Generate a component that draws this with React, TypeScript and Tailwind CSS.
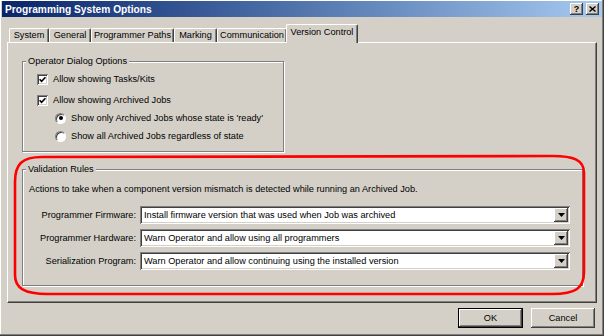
import React from "react";

const raised =
  "shadow-[inset_-1px_-1px_0_#404040,inset_1px_1px_0_#fff,inset_-2px_-2px_0_#808080]";
const sunken =
  "shadow-[inset_1px_1px_0_#808080,inset_-1px_-1px_0_#fff,inset_2px_2px_0_#404040,inset_-2px_-2px_0_#d4d0c8]";

const CheckBox = () => (
  <div className={`w-[11px] h-[11px] bg-white flex items-center justify-center shrink-0 ${sunken}`}>
    <svg width="7" height="7" viewBox="0 0 7 7">
      <path d="M0.6 3.2 L2.6 5.3 L6.4 1.2" stroke="#000" strokeWidth="1.6" fill="none" />
    </svg>
  </div>
);

const Radio = ({ on }: { on?: boolean }) => (
  <div className="w-[11px] h-[11px] rounded-full bg-white border border-t-[#808080] border-l-[#808080] border-b-white border-r-white shadow-[inset_1px_1px_0_#404040] flex items-center justify-center shrink-0">
    {on && <div className="w-[4px] h-[4px] rounded-full bg-black" />}
  </div>
);

const Combo = ({ text }: { text: string }) => (
  <div className={`w-[430px] h-[18px] bg-white flex items-center ${sunken}`}>
    <span className="flex-1 pl-[4px] whitespace-nowrap overflow-hidden">{text}</span>
    <div className={`w-[14px] h-[14px] mr-[2px] bg-[#d4d0c8] flex items-center justify-center ${raised}`}>
      <svg width="7" height="4" viewBox="0 0 7 4">
        <path d="M0 0 H7 L3.5 4 Z" fill="#000" />
      </svg>
    </div>
  </div>
);

const Row = ({ label, value }: { label: string; value: string }) => (
  <div className="flex items-center">
    <div className="w-[113px] mr-[4px] text-right whitespace-nowrap">{label}</div>
    <Combo text={value} />
  </div>
);

const tabs: { name: string; w: string; sel?: boolean }[] = [
  { name: "System", w: "w-[40px]" },
  { name: "General", w: "w-[42px]" },
  { name: "Programmer Paths", w: "w-[83px]" },
  { name: "Marking", w: "w-[43px]" },
  { name: "Communication", w: "w-[70px]" },
  { name: "Version Control", w: "w-[72px]", sel: true },
];

export default function App() {
  return (
    <div className="relative w-[604px] h-[336px] overflow-hidden bg-[#d4d0c8] text-black font-['Liberation_Sans',Arial,sans-serif] text-[9.2px] leading-[11px] shadow-[inset_-1px_-1px_0_#404040,inset_-2px_-2px_0_#808080,inset_1px_1px_0_#fff] flex flex-col px-[2px] pt-[1px]">
      {/* Title bar */}
      <div className="h-[16px] flex items-center bg-gradient-to-r from-[#0a246a] to-[#a6caf0] pl-[3px] pr-[3px]">
        <span className="text-white font-bold text-[10.2px] flex-1">Programming System Options</span>
        <div className={`w-[13px] h-[12px] bg-[#d4d0c8] flex items-center justify-center font-bold text-[9px] leading-none ${raised}`}>?</div>
        <div className={`ml-[3px] w-[13px] h-[12px] bg-[#d4d0c8] flex items-center justify-center ${raised}`}>
          <svg width="7" height="6" viewBox="0 0 7 6">
            <path d="M0.5 0.5 L6.5 5.5 M6.5 0.5 L0.5 5.5" stroke="#000" strokeWidth="1.4" />
          </svg>
        </div>
      </div>

      {/* Tabs */}
      <div className="mt-[8px] ml-[7px] h-[17px] flex items-end relative z-10">
        {tabs.map((t) =>
          t.sel ? (
            <div
              key={t.name}
              className={`${t.w} h-[19px] -mb-[1px] -ml-[1px] bg-[#d4d0c8] border-t border-l border-white border-r border-r-[#404040] shadow-[inset_-1px_0_0_#808080] rounded-t-[2px] flex items-start justify-center pt-[2px] whitespace-nowrap`}
            >
              {t.name}
            </div>
          ) : (
            <div
              key={t.name}
              className={`${t.w} h-[14px] border-t border-l border-white border-r border-r-[#404040] shadow-[inset_-1px_0_0_#808080] rounded-t-[2px] flex items-center justify-center whitespace-nowrap`}
            >
              {t.name}
            </div>
          )
        )}
      </div>

      {/* Panel */}
      <div className="ml-[5px] w-[590px] h-[261px] border-t border-l border-white border-r border-b border-r-[#404040] border-b-[#404040] shadow-[inset_-1px_-1px_0_#808080] flex flex-col pl-[14px] pt-[18px]">
        {/* Operator Dialog Options */}
        <div className="relative w-[262px] h-[91px] border border-[#808080] shadow-[inset_1px_1px_0_#fff,1px_1px_0_#fff] flex flex-col pt-[10px]">
          <span className="absolute -top-[6px] left-[3px] px-[2px] bg-[#d4d0c8] whitespace-nowrap">Operator Dialog Options</span>
          <div className="h-[14px] flex items-center pl-[14px] gap-[5px]">
            <CheckBox />
            <span>Allow showing Tasks/Kits</span>
          </div>
          <div className="mt-[7px] h-[14px] flex items-center pl-[14px] gap-[5px]">
            <CheckBox />
            <span>Allow showing Archived Jobs</span>
          </div>
          <div className="mt-[4px] h-[14px] flex items-center pl-[32px] gap-[5px]">
            <Radio on />
            <span>Show only Archived Jobs whose state is 'ready'</span>
          </div>
          <div className="mt-[4px] h-[14px] flex items-center pl-[32px] gap-[5px]">
            <Radio />
            <span>Show all Archived Jobs regardless of state</span>
          </div>
        </div>

        {/* Validation Rules */}
        <div className="relative mt-[17px] w-[561px] h-[117px] border border-[#808080] shadow-[inset_1px_1px_0_#fff,1px_1px_0_#fff] flex flex-col pt-[14px]">
          <span className="absolute -top-[6px] left-[3px] px-[2px] bg-[#d4d0c8] whitespace-nowrap">Validation Rules</span>
          <div className="pl-[6px] whitespace-nowrap">
            Actions to take when a component version mismatch is detected while running an Archived Job.
          </div>
          <div className="mt-[11px] flex flex-col gap-[5px]">
            <Row label="Programmer Firmware:" value="Install firmware version that was used when Job was archived" />
            <Row label="Programmer Hardware:" value="Warn Operator and allow using all programmers" />
            <Row label="Serialization Program:" value="Warn Operator and allow continuing using the installed version" />
          </div>
        </div>
      </div>

      {/* Buttons */}
      <div className="mt-[5px] flex justify-end gap-[8px] pr-[7px]">
        <div className={`w-[65px] h-[20px] border border-black flex items-center justify-center ${raised}`}>OK</div>
        <div className={`w-[64px] h-[20px] flex items-center justify-center ${raised}`}>Cancel</div>
      </div>

      {/* Red annotation */}
      <svg className="absolute left-0 top-0 pointer-events-none" width="604" height="336" viewBox="0 0 604 336">
        <path
          d="M42 157 L552 156 C574 156 584 160 584 173 L584 272 C584 288 576 294 552 294 L48 294 C24 294 15 288 15 275 L15 182 C15 164 22 157 42 157 Z"
          stroke="#ff0000"
          strokeWidth="2.6"
          fill="none"
        />
      </svg>
    </div>
  );
}
